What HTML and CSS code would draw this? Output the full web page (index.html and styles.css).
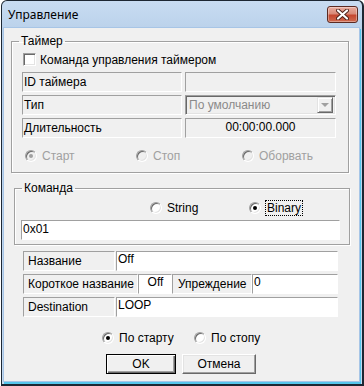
FILE: index.html
```html
<!DOCTYPE html>
<html lang="ru">
<head>
  <meta charset="UTF-8">
  <title>Управление</title>
  <link rel="stylesheet" href="styles.css">
</head>
<body>

  <div class="window">
    <div class="titlebar">
      <span class="title">Управление</span>
      <span class="close">
        <svg width="13" height="11" viewBox="0 0 13 11">
          <path d="M2 1.5 L11 9.5 M11 1.5 L2 9.5" stroke="#4a1f18" stroke-width="4" stroke-linecap="round"/>
          <path d="M2 1.5 L11 9.5 M11 1.5 L2 9.5" stroke="#fff" stroke-width="2.2" stroke-linecap="round"/>
        </svg>
      </span>
    </div>

    <div class="client">
      <fieldset class="group group-timer">
        <legend>Таймер</legend>
        <div class="check-row"><span class="check"></span>Команда управления таймером</div>
        <div class="timer-grid">
          <div class="lbl lbl-tight">ID таймера</div>
          <div class="val val-off"></div>
          <div class="lbl lbl-tight">Тип</div>
          <div class="combo">
            <span class="combo-text">По умолчанию</span>
            <span class="drop"><i></i></span>
          </div>
          <div class="lbl lbl-tight">Длительность</div>
          <div class="val val-off val-center">00:00:00.000</div>
        </div>
        <div class="radios radios-timer">
          <span class="radio disabled"><i class="rb on"></i>Старт</span>
          <span class="radio disabled"><i class="rb"></i>Стоп</span>
          <span class="radio disabled"><i class="rb"></i>Оборвать</span>
        </div>
      </fieldset>

      <fieldset class="group group-cmd">
        <legend>Команда</legend>
        <div class="radios radios-cmd">
          <span class="radio"><i class="rb"></i>String</span>
          <span class="radio"><i class="rb on"></i><span class="focus">Binary</span></span>
        </div>
        <div class="val cmd-text">0x01</div>
      </fieldset>

      <div class="fields">
        <div class="field-row">
          <div class="lbl w-name">Название</div>
          <div class="val w-value gap-left">Off</div>
        </div>
        <div class="field-row">
          <div class="lbl w-short">Короткое название</div>
          <div class="val w-off val-mid">Off</div>
          <div class="lbl lbl-wide w-lead">Упреждение</div>
          <div class="val w-lead-val">0</div>
        </div>
        <div class="field-row">
          <div class="lbl w-name">Destination</div>
          <div class="val w-value gap-left">LOOP</div>
        </div>
      </div>

      <div class="radios radios-mode">
        <span class="radio"><i class="rb on"></i>По старту</span>
        <span class="radio"><i class="rb"></i>По стопу</span>
      </div>

      <div class="buttons">
        <button class="btn btn-default">OK</button>
        <button class="btn btn-cancel">Отмена</button>
      </div>
    </div>
  </div>

</body>
</html>
```

FILE: styles.css
```css
* {
  box-sizing: border-box;
}
body {
  margin: 0;
  background: #fff;
  font-family: "Liberation Sans", Arial, sans-serif;
  font-size: 12px;
  color: #000;
}

/* окно */
.window {
  margin-left: 1px;
  width: 363px;
  height: 386px;
  border: 1px solid #1d2733;
  border-right-width: 2px;
  border-bottom-width: 2px;
  border-radius: 6px 6px 0 0;
  background: linear-gradient(#c8dcf2, #bad1ea 30px, #c4d9ef);
  display: flex;
  flex-direction: column;
}
.titlebar {
  height: 26px;
  display: flex;
  align-items: center;
  justify-content: space-between;
  padding: 0 4px 0 6px;
}
.title {
  font-family: "Noto Sans", sans-serif;
  font-size: 12px;
  margin-top: 1px;
}
.close {
  width: 31px;
  height: 17px;
  border: 1px solid #5b2a22;
  border-radius: 3px;
  background: linear-gradient(#e9ad9f, #d98a78 45%, #c5472f 55%, #cf6a4f);
  box-shadow: inset 0 0 0 1px rgba(255, 255, 255, 0.35);
  display: flex;
  align-items: center;
  justify-content: center;
}
.client {
  flex: 1;
  margin: 0 2px 2px 1px;
  border: 1px solid #a7c5e6;
  background: #f0f0f0;
  box-shadow: 1px 2px 0 #55c6ec;
  display: flex;
  flex-direction: column;
  align-items: flex-start;
}

/* группы */
.group {
  margin: 0;
  padding: 0;
  min-width: 0;
  border: 1px solid #a0a0a0;
  box-shadow: inset 1px 1px 0 #fff, 1px 1px 0 #fff;
}
.group legend {
  margin-left: 7px;
  padding: 0 2px;
  line-height: 14px;
}
.group-timer {
  margin: 6px 0 0 7px;
  width: 338px;
  padding-bottom: 11px;
}
.group-cmd {
  margin: 8px 0 0 10px;
  width: 336px;
  padding-bottom: 4px;
}

.check-row {
  display: flex;
  align-items: center;
  height: 13px;
  margin: 5px 0 0 11px;
}
.check {
  width: 13px;
  height: 13px;
  margin-right: 4px;
  border: 1px solid;
  border-color: #a0a0a0 #fff #fff #a0a0a0;
  box-shadow: inset 1px 1px 0 #696969, inset -1px -1px 0 #e3e3e3;
  background: #fff;
}

.timer-grid {
  display: grid;
  grid-template-columns: 160px 151px;
  grid-auto-rows: 20px;
  column-gap: 3px;
  row-gap: 3px;
  margin: 6px 0 0 10px;
}

/* статические поля */
.lbl {
  border: 1px solid;
  border-color: #a0a0a0 #fff #fff #a0a0a0;
  background: #f0f0f0;
  padding-left: 4px;
  line-height: 19px;
  white-space: nowrap;
  overflow: hidden;
}
.lbl-tight {
  padding-left: 1px;
}
.lbl-wide {
  padding-left: 5px;
}
.val {
  border: 1px solid;
  border-color: #a0a0a0 #fff #fff #a0a0a0;
  background: #fff;
  padding: 1px 0 0 1px;
  line-height: 13px;
  white-space: nowrap;
}
.val-off {
  background: #f0f0f0;
}
.val-center {
  text-align: center;
  line-height: 17px;
  padding: 0;
}
.val-mid {
  text-align: center;
}

.combo {
  display: flex;
  align-items: center;
  justify-content: space-between;
  border: 1px solid;
  border-color: #a0a0a0 #fff #fff #a0a0a0;
  box-shadow: inset 1px 1px 0 #696969, inset -1px -1px 0 #e3e3e3;
  background: #f0f0f0;
  padding: 2px;
  color: #8a8a8a;
}
.combo-text {
  padding-left: 1px;
}
.drop {
  width: 16px;
  height: 16px;
  border: 1px solid;
  border-color: #e3e3e3 #696969 #696969 #e3e3e3;
  box-shadow: inset 1px 1px 0 #fff, inset -1px -1px 0 #a0a0a0;
  display: flex;
  align-items: center;
  justify-content: center;
}
.drop i {
  width: 0;
  height: 0;
  border-left: 4px solid transparent;
  border-right: 4px solid transparent;
  border-top: 4px solid #a0a0a0;
}

/* переключатели */
.radios {
  display: grid;
  align-items: center;
}
.radio {
  display: flex;
  align-items: center;
  white-space: nowrap;
}
.radio.disabled {
  color: #a0a0a0;
}
.rb {
  position: relative;
  width: 12px;
  height: 12px;
  margin-right: 5px;
  border-radius: 50%;
  border: 1px solid;
  border-color: #a0a0a0 #fff #fff #a0a0a0;
  box-shadow: inset 1px 1px 0 #696969, inset -1px -1px 0 #e3e3e3;
  background: #fff;
}
.disabled .rb {
  background: #f0f0f0;
}
.rb.on::after {
  content: "";
  position: absolute;
  left: 3px;
  top: 3px;
  width: 4px;
  height: 4px;
  border-radius: 50%;
  background: #000;
}
.disabled .rb.on::after {
  background: #a0a0a0;
}
.focus {
  outline: 1px dotted #000;
  padding: 0 1px;
  line-height: 14px;
}

.radios-timer {
  grid-template-columns: 111px 106px auto;
  height: 12px;
  margin: 11px 0 0 13px;
}
.radios-cmd {
  grid-template-columns: 99px auto;
  height: 14px;
  margin: 6px 0 0 135px;
}
.cmd-text {
  width: 319px;
  height: 20px;
  margin: 5px 0 0 6px;
  padding-top: 2px;
}

/* нижние поля */
.fields {
  display: flex;
  flex-direction: column;
  gap: 3px;
  margin: 6px 0 0 19px;
}
.field-row {
  display: flex;
  height: 20px;
}
.w-name { width: 92px; }
.w-value { width: 222px; }
.gap-left { margin-left: 1px; }
.w-short { width: 115px; }
.w-off { width: 34px; }
.w-lead { width: 80px; }
.w-lead-val { width: 86px; }

.radios-mode {
  grid-template-columns: 92px auto;
  height: 12px;
  margin: 14px 0 0 98px;
}

/* кнопки */
.buttons {
  display: flex;
  gap: 6px;
  margin: 11px 0 0 102px;
}
.btn {
  height: 20px;
  padding: 0;
  font-family: "Liberation Sans", Arial, sans-serif;
  font-size: 12px;
  color: #000;
  background: #f0f0f0;
  border: 1px solid;
  border-color: #fff #696969 #696969 #fff;
  box-shadow: inset -1px -1px 0 #a0a0a0, inset 1px 1px 0 #e3e3e3;
}
.btn-default {
  width: 70px;
  border-color: #000;
  box-shadow: inset 1px 1px 0 #fff, inset -1px -1px 0 #696969, inset -2px -2px 0 #a0a0a0;
}
.btn-cancel {
  width: 74px;
}
```
